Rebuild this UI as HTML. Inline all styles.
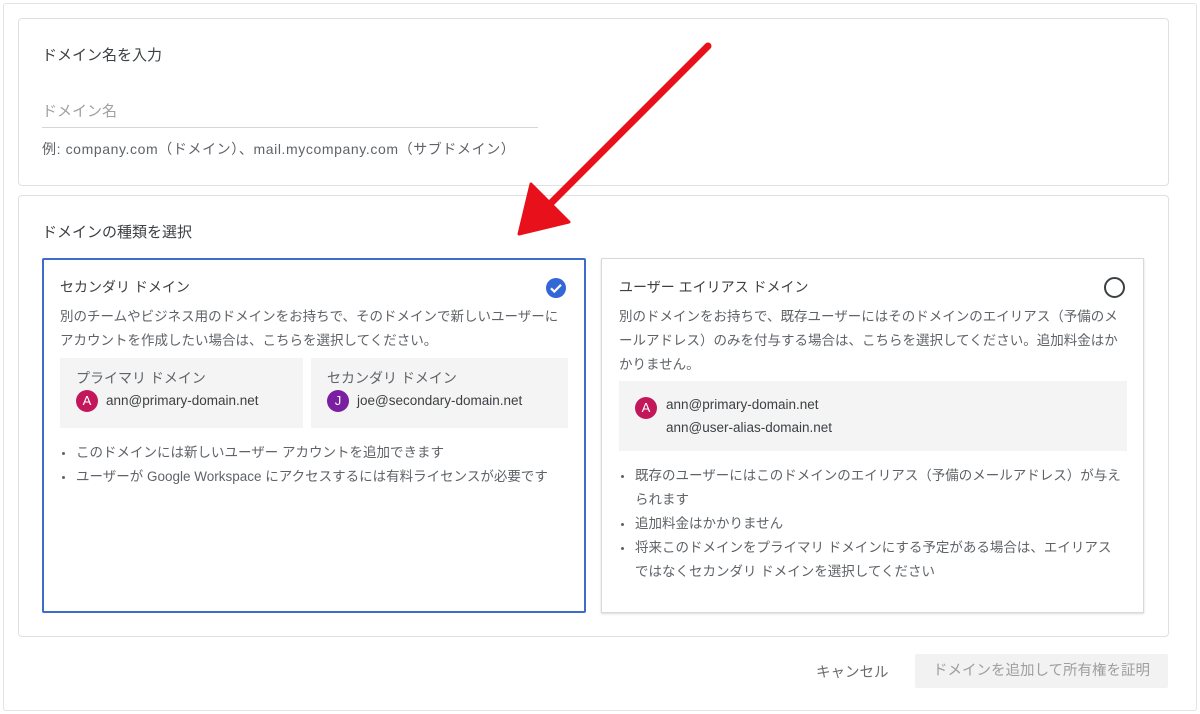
<!DOCTYPE html>
<html><head><meta charset="utf-8"><style>
*{margin:0;padding:0;box-sizing:border-box}
body{width:1200px;height:714px;background:#fff;font-family:"Liberation Sans","Noto Sans CJK JP",sans-serif;color:#3c4043;position:relative;overflow:hidden}
.abs{position:absolute}
.frame{left:3px;top:3px;width:1194px;height:708px;border:1px solid #e3e3e3;border-radius:3px}
.card{border:1px solid #e0e0e0;border-radius:4px}
.t{font-size:15px;color:#3c4043;white-space:nowrap}
.s{font-size:13.5px;color:#5f6368;white-space:nowrap}
.av{width:22px;height:22px;border-radius:50%;color:#fff;font-size:13px;text-align:center;line-height:22px}
ul{list-style:none}
li{font-size:13.5px;color:#5f6368;line-height:24px;position:relative;padding-left:16px}
li:before{content:"";position:absolute;left:2px;top:11px;width:3px;height:3px;background:#5f6368;border-radius:50%}
</style></head><body>
<div class="abs frame"></div>
<div class="abs card" style="left:18px;top:18px;width:1151px;height:168px"></div>
<div class="abs t" style="left:42px;top:44px">ドメイン名を入力</div>
<div class="abs" style="left:42px;top:100px;font-size:15px;color:#a0a0a0">ドメイン名</div>
<div class="abs" style="left:42px;top:127px;width:496px;height:1px;background:#d6d6d6"></div>
<div class="abs s" style="left:42px;top:139px;font-size:14px;letter-spacing:0.6px">例: company.com（ドメイン）、mail.mycompany.com（サブドメイン）</div>

<div class="abs card" style="left:18px;top:195px;width:1151px;height:442px"></div>
<div class="abs t" style="left:42px;top:221px">ドメインの種類を選択</div>

<div class="abs" style="left:42px;top:258px;width:544px;height:355px;border:2px solid #3f6bc9;border-radius:2px"></div>
<div class="abs t" style="left:60px;top:277px;font-size:14px">セカンダリ ドメイン</div>
<svg class="abs" style="left:545px;top:277px" width="22" height="22" viewBox="0 0 22 22"><circle cx="11" cy="11" r="10" fill="#3367d6"/><path d="M6 11.3l3.3 3.3 6.7-6.8" stroke="#fff" stroke-width="2.2" fill="none"/></svg>
<div class="abs s" style="left:60px;top:305px;line-height:24px;font-size:13.5px">別のチームやビジネス用のドメインをお持ちで、そのドメインで新しいユーザーに<br>アカウントを作成したい場合は、こちらを選択してください。</div>
<div class="abs" style="left:60px;top:358px;width:243px;height:70px;background:#f4f4f4"></div>
<div class="abs" style="left:311px;top:358px;width:257px;height:70px;background:#f4f4f4"></div>
<div class="abs t" style="left:76px;top:368px;font-size:14px;color:#5f6368">プライマリ ドメイン</div>
<div class="abs t" style="left:327px;top:368px;font-size:14px;color:#5f6368">セカンダリ ドメイン</div>
<div class="abs av" style="left:76px;top:390px;background:#c2185b">A</div>
<div class="abs s" style="left:106px;top:393px;color:#3c4043">ann@primary-domain.net</div>
<div class="abs av" style="left:327px;top:390px;background:#7b1fa2">J</div>
<div class="abs s" style="left:357px;top:393px;color:#3c4043">joe@secondary-domain.net</div>
<ul class="abs" style="left:60px;top:441px;width:510px"><li>このドメインには新しいユーザー アカウントを追加できます</li><li>ユーザーが Google Workspace にアクセスするには有料ライセンスが必要です</li></ul>

<div class="abs" style="left:601px;top:258px;width:543px;height:355px;border:1px solid #d9d9d9;box-shadow:0 1px 2px rgba(0,0,0,.15)"></div>
<div class="abs t" style="left:619px;top:277px;font-size:14px">ユーザー エイリアス ドメイン</div>
<div class="abs" style="left:1104px;top:277px;width:21px;height:21px;border:2px solid #3c4043;border-radius:50%"></div>
<div class="abs s" style="left:619px;top:305px;line-height:24px">別のドメインをお持ちで、既存ユーザーにはそのドメインのエイリアス（予備のメ<br>ールアドレス）のみを付与する場合は、こちらを選択してください。追加料金はか<br>かりません。</div>
<div class="abs" style="left:619px;top:381px;width:508px;height:70px;background:#f4f4f4"></div>
<div class="abs av" style="left:635px;top:397px;background:#c2185b">A</div>
<div class="abs s" style="left:666px;top:393px;color:#3c4043;line-height:23px">ann@primary-domain.net<br>ann@user-alias-domain.net</div>
<ul class="abs" style="left:619px;top:464px;width:510px"><li>既存のユーザーにはこのドメインのエイリアス（予備のメールアドレス）が与え<br>られます</li><li>追加料金はかかりません</li><li>将来このドメインをプライマリ ドメインにする予定がある場合は、エイリアス<br>ではなくセカンダリ ドメインを選択してください</li></ul>

<div class="abs" style="left:816px;top:661px;font-size:14.5px;color:#6b6b6b">キャンセル</div>
<div class="abs" style="left:915px;top:654px;width:253px;height:34px;background:#f2f2f2;border-radius:2px;font-size:14.5px;color:#9e9e9e;text-align:center;line-height:34px">ドメインを追加して所有権を証明</div>

<svg class="abs" style="left:0;top:0" width="1200" height="714"><line x1="708" y1="46" x2="548" y2="206" stroke="#e8101a" stroke-width="7" stroke-linecap="round"/><path d="M519 234 L531 184 L569 222 Z" fill="#e8101a" stroke="#e8101a" stroke-width="3" stroke-linejoin="round"/></svg>
</body></html>
